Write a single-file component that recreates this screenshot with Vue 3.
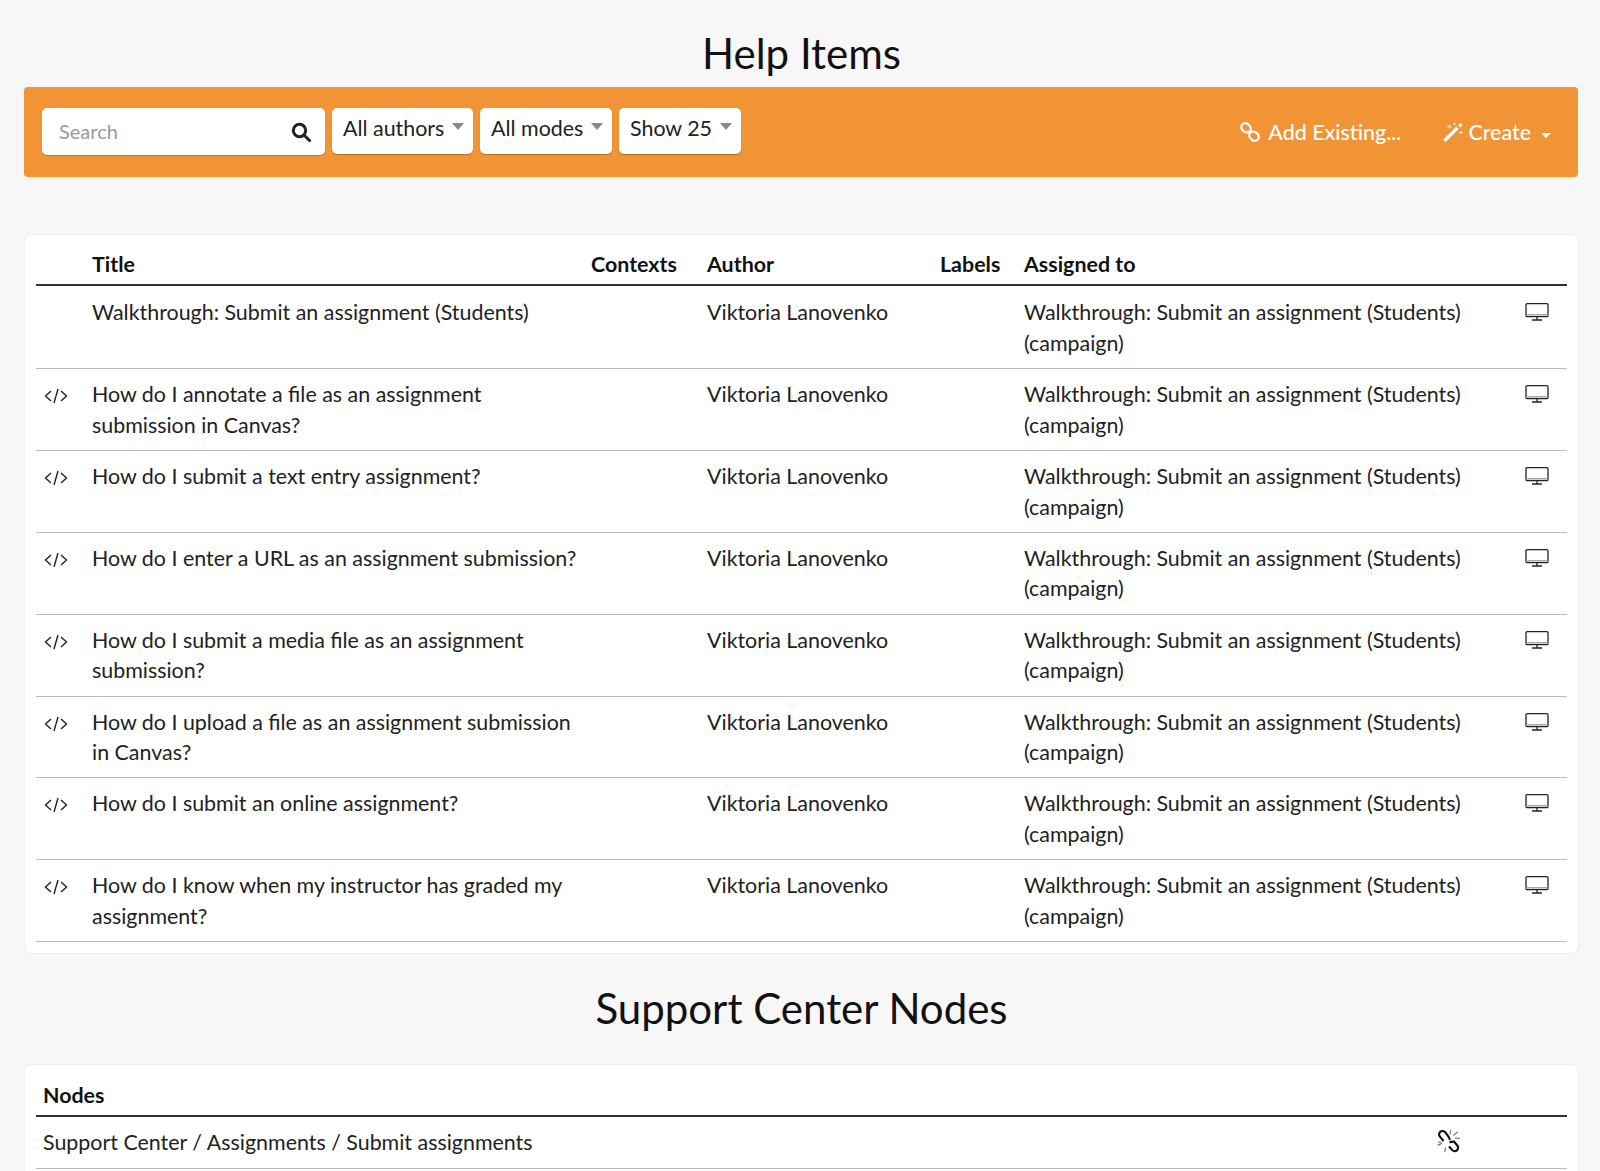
<script setup>
const rows = [
  { title: 'Walkthrough: Submit an assignment (Students)', code: false },
  { title: 'How do I annotate a file as an assignment submission in Canvas?', code: true },
  { title: 'How do I submit a text entry assignment?', code: true },
  { title: 'How do I enter a URL as an assignment submission?', code: true },
  { title: 'How do I submit a media file as an assignment submission?', code: true },
  { title: 'How do I upload a file as an assignment submission in Canvas?', code: true },
  { title: 'How do I submit an online assignment?', code: true },
  { title: 'How do I know when my instructor has graded my assignment?', code: true },
]
</script>

<template>
  <div class="page">
    <h1 class="heading first">Help Items</h1>
    <div class="toolbar">
      <div class="search">
        <span class="placeholder">Search</span>
        <svg class="search-icon" viewBox="0 0 20 20" width="20" height="20" fill="none" stroke="#222" stroke-width="3">
          <circle cx="8.5" cy="8.5" r="6.2" />
          <path d="M13 13l5.6 5.6" stroke-linecap="round" />
        </svg>
      </div>
      <button class="select author">All authors<i class="caret"></i></button>
      <button class="select modes">All modes<i class="caret"></i></button>
      <button class="select show">Show 25<i class="caret"></i></button>
      <div class="actions">
        <span class="action add">
          <svg viewBox="0 0 20 20" width="20" height="20" fill="none" stroke="#fff" stroke-width="2.2">
            <rect x="1" y="1.800" width="10" height="8" rx="4" transform="rotate(42 6 5.800)" />
            <rect x="9" y="10.200" width="10" height="8" rx="4" transform="rotate(42 14 14.200)" />
          </svg>
          Add Existing...
        </span>
        <span class="action create">
          <svg viewBox="0 0 20 20" width="20" height="20" fill="#fff">
            <path d="M.8 17 13.400 4.600l2.300 2.300L3.200 19.400a1 1 0 0 1-1.400 0l-1-1a1 1 0 0 1 0-1.400Z" />
            <path d="M15 3.200 17.400 1 19.500 3.100 17.300 5.500Z" />
            <path d="M6 2.500h1v1.700h1.700v1H7v1.700H6V5.200H4.300v-1H6ZM17.500 9h.9v1.100h1.100v.9h-1.100v1.100h-.9V11h-1.100v-.9h1.100ZM11 .5h.8v1h1v.8h-1v1H11v-1h-1v-.8h1Z" />
          </svg>
          Create
          <i class="caret white"></i>
        </span>
      </div>
    </div>

    <section class="card main-card">
      <div class="row head">
        <div></div>
        <div>Title</div>
        <div>Contexts</div>
        <div>Author</div>
        <div>Labels</div>
        <div>Assigned to</div>
        <div></div>
      </div>
      <div v-for="r in rows" :key="r.title" class="row">
        <div class="code">
          <svg v-if="r.code" viewBox="0 0 24 16" width="24" height="16" fill="none" stroke="#222" stroke-width="1.4">
            <path d="M7 3 1.500 8 7 13M17 3l5.500 5L17 13M14 1 10 15" />
          </svg>
        </div>
        <div class="title">{{ r.title }}</div>
        <div></div>
        <div>Viktoria Lanovenko</div>
        <div></div>
        <div>Walkthrough: Submit an assignment (Students) (campaign)</div>
        <div class="monitor">
          <svg viewBox="0 0 24 20" width="24" height="20" fill="none" stroke="#222" stroke-width="1.3">
            <rect x="1" y="1.700" width="22" height="13" rx="1.200" />
            <path d="M1 12.800h22" stroke="#999" />
            <path d="M12 14.500v3M7 18h10" />
          </svg>
        </div>
      </div>
    </section>

    <h1 class="heading second">Support Center Nodes</h1>

    <section class="card node-card">
      <div class="node-row node-head">Nodes</div>
      <div class="node-row">
        <span>Support Center / Assignments / Submit assignments</span>
        <svg class="unlink" viewBox="0 0 24 24" width="26" height="26" fill="none" stroke="#111">
          <path d="M7 12 3.600 8a3.200 3.200 0 0 1 .4-4.500 3.200 3.200 0 0 1 4.500.4L11.500 8c.8 1 1.200 1.800 1 3M12.500 12.500l1 .5 3-.5 3.200 3.600a3.200 3.200 0 0 1-.4 4.500 3.200 3.200 0 0 1-4.500-.4L12 17" stroke-width="2" />
          <path d="M13.500 2 13 6M20 3.500l-4 3.500M22 9.500l-4.500-.2M1.500 16l4-1.800M8 22l1-4M2 13h3" stroke="#777" stroke-width="1.100" />
        </svg>
      </div>
    </section>
  </div>
</template>

<style>
html, body {
  margin: 0;
  background: #f7f7f7;
}
</style>

<style scoped>
.page {
  box-sizing: border-box;
  height: 1171px;
  overflow: hidden;
  padding: 0 22px 0 25px;
  font-family: Lato, "Open Sans", sans-serif;
  color: #222;
  font-size: 21.42px;
  line-height: 30.5px;
}
.heading {
  margin: 0;
  text-align: center;
  font-weight: 400;
  color: #111;
  font-size: 42px;
  line-height: 50px;
}
.heading.first {
  padding-top: 28px;
  height: 59px;
}
.heading.second {
  padding-top: 30px;
  height: 50px;
  margin-bottom: 32px;
}
.toolbar {
  display: flex;
  align-items: flex-start;
  box-sizing: border-box;
  height: 90px;
  margin-left: -1px;
  padding: 21px 17px 0 18px;
  gap: 7px;
  background: #f09436;
  border-radius: 4px;
  border-bottom: 1px solid #f39a26;
}
.search {
  display: flex;
  align-items: center;
  justify-content: space-between;
  box-sizing: border-box;
  width: 283px;
  height: 47px;
  padding: 0 14px 0 17px;
  background: #fff;
  border-radius: 5px;
  box-shadow: 0 1px 1px rgba(0, 0, 0, .2);
}
.placeholder {
  color: #999;
  font-size: 20px;
}
.select {
  display: flex;
  align-items: flex-start;
  box-sizing: border-box;
  height: 46px;
  padding: 5px 0 0 11px;
  border: 0;
  background: #fff;
  border-radius: 5px;
  box-shadow: 0 1px 1px rgba(0, 0, 0, .25);
  font: inherit;
  color: #222;
}
.author { width: 141px; }
.modes { width: 132px; }
.show { width: 122px; }
.caret {
  display: inline-block;
  width: 0;
  height: 0;
  margin: 10px 0 0 8px;
  border-left: 6px solid transparent;
  border-right: 6px solid transparent;
  border-top: 7px solid #888;
}
.actions {
  display: flex;
  margin-left: auto;
  gap: 42px;
  padding: 9px 10px 0 0;
  color: #fff;
}
.action {
  display: flex;
  align-items: center;
  gap: 8px;
  height: 30px;
  font-weight: 500;
}
.action.create { gap: 5px; }
.caret.white {
  border-top-color: #fff;
  border-left-width: 5.5px;
  border-right-width: 5.5px;
  border-top-width: 5.500px;
  margin: 6px 0 0 5px;
}
.card {
  box-sizing: border-box;
  background: #fff;
  border-radius: 6px;
  box-shadow: 0 0 2px rgba(0, 0, 0, .12);
  padding: 0 11px;
}
.main-card {
  margin-top: 58px;
  height: 718px;
}
.row {
  display: grid;
  grid-template-columns: 56px 499px 116px 233px 84px 500px 43px;
  box-sizing: border-box;
  height: 81.8px;
  padding-top: 10px;
  border-bottom: 1px solid #bbb;
}
.row:nth-child(2) {
  height: 83.4px;
  padding-top: 11px;
}
.row.head {
  height: 51px;
  padding-top: 14px;
  font-weight: 700;
  color: #111;
  border-bottom: 2px solid #333;
}
.title {
  padding-right: 9px;
}
.code {
  padding: 9px 0 0 8px;
}
.code svg, .monitor svg, .unlink {
  display: block;
}
.monitor svg {
  margin: 5px 0 0 1px;
}
.node-card {
  height: 200px;
}
.node-row {
  display: flex;
  align-items: flex-start;
  box-sizing: border-box;
  height: 52px;
  padding: 10px 0 0 7px;
  border-bottom: 1px solid #bbb;
}
.node-head {
  height: 52px;
  padding-top: 15px;
  font-weight: 700;
  color: #111;
  border-bottom: 2px solid #333;
}
.unlink {
  margin-left: auto;
  margin-right: 105px;
  margin-top: 1px;
}
</style>
